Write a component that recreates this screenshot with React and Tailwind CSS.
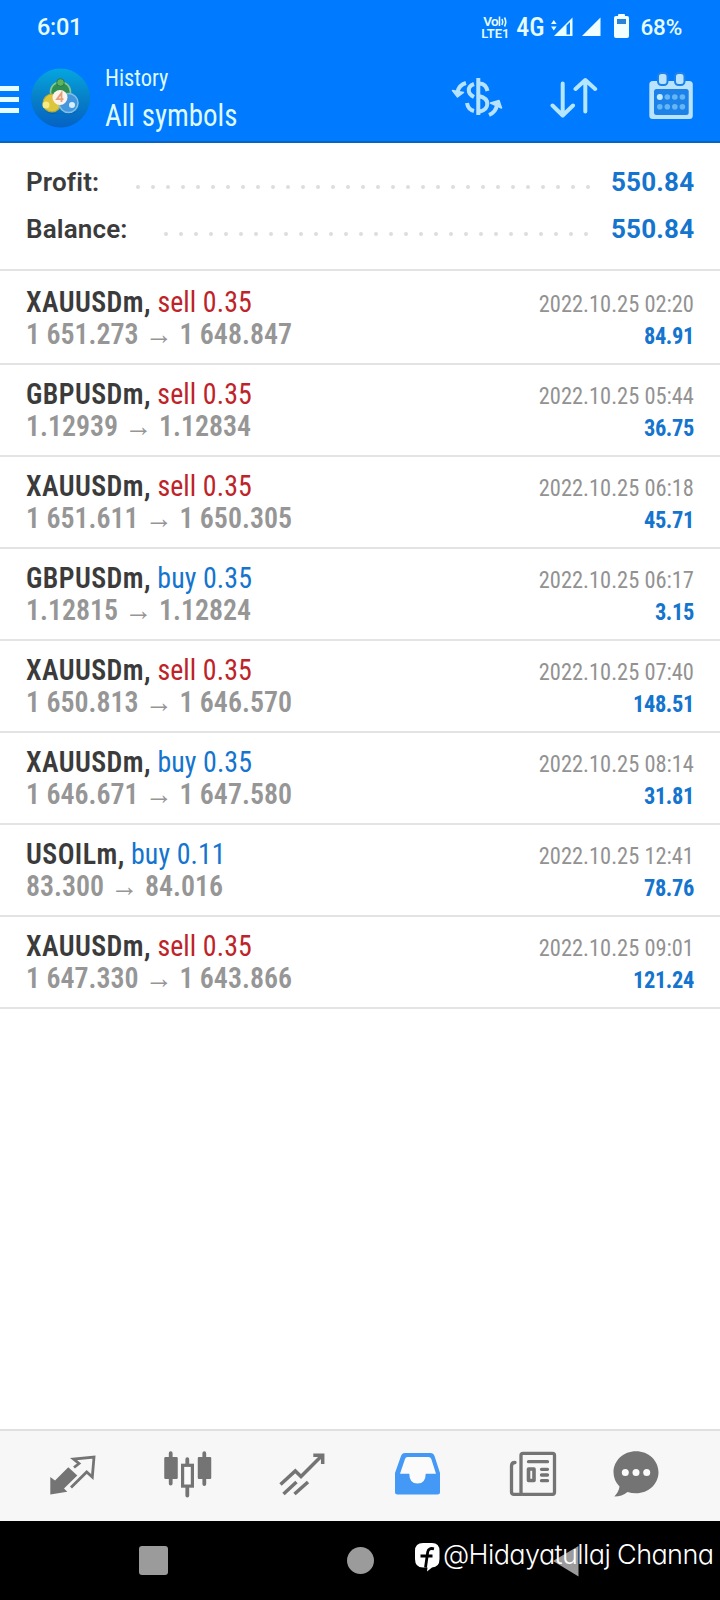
const trades = [
  ["XAUUSDm", "sell", "0.35", "1 651.273", "1 648.847", "2022.10.25 02:20", "84.91"],
  ["GBPUSDm", "sell", "0.35", "1.12939", "1.12834", "2022.10.25 05:44", "36.75"],
  ["XAUUSDm", "sell", "0.35", "1 651.611", "1 650.305", "2022.10.25 06:18", "45.71"],
  ["GBPUSDm", "buy", "0.35", "1.12815", "1.12824", "2022.10.25 06:17", "3.15"],
  ["XAUUSDm", "sell", "0.35", "1 650.813", "1 646.570", "2022.10.25 07:40", "148.51"],
  ["XAUUSDm", "buy", "0.35", "1 646.671", "1 647.580", "2022.10.25 08:14", "31.81"],
  ["USOILm", "buy", "0.11", "83.300", "84.016", "2022.10.25 12:41", "78.76"],
  ["XAUUSDm", "sell", "0.35", "1 647.330", "1 643.866", "2022.10.25 09:01", "121.24"],
];

function StatusBar() {
  return (
    <div className="flex h-[52px] items-start pl-[37px] pr-[38px] pt-3 font-medium text-[#e4fbff]">
      <span className="mt-px text-[23.5px] leading-[29px] tracking-[-0.3px]">6:01</span>
      <div className="ml-auto flex items-start">
        <div className="mt-[4px] flex w-[27px] flex-col text-[13px] font-semibold leading-[11px]">
          <span className="flex pl-0.5 text-[13.5px] tracking-[-0.6px]">
            Vo
            <svg className="h-3 w-2.5" viewBox="0 0 10 12" fill="none" stroke="#e4fbff" strokeWidth="1.6">
              <path d="M1.500 .5v9.500M4 3q1.500 3 0 6M6.500 1.500q2.500 4.500 0 9" />
            </svg>
          </span>
          <span>LTE1</span>
        </div>
        <span className="ml-[8px] text-[26px] leading-[30px] [font-family:'Roboto_Condensed',Roboto,sans-serif]">4G</span>
        <svg className="ml-[7px] mt-[5px] h-5 w-[22px]" viewBox="0 0 22 20" fill="#e9ffff">
          <path d="M0 7l2.800-4 2.800 4zM0 9.500h5.600l-2.800 4z" />
          <path d="M3 19L21.500 .5V19zM15.500 17.500h3.500V5L15.500 8.500z" fillRule="evenodd" />
        </svg>
        <svg className="ml-[9px] mt-[5px] h-5 w-[19px]" viewBox="0 0 19 20" fill="#f2ffff">
          <path d="M0 19L18.500 .5V19z" />
        </svg>
        <svg className="ml-[13px] mt-[2px] h-[25px] w-[15px]" viewBox="0 0 15 25">
          <rect x="4" y="0" width="7" height="4" rx="1" fill="#f2ffff" />
          <rect x="0" y="2" width="15" height="22" rx="2" fill="#f2ffff" />
          <rect x="3" y="5" width="9" height="5" fill="#2a83d8" />
        </svg>
        <span className="ml-[11px] text-[22.5px] leading-[30px] tracking-[-0.2px]">68%</span>
      </div>
    </div>
  );
}

function Logo() {
  return (
    <svg className="ml-3 h-[60px] w-[60px]" viewBox="0 0 60 60">
      <defs>
        <linearGradient id="disc" x1="0" y1="0" x2="0" y2="1">
          <stop offset="0" stopColor="#05a6e0" />
          <stop offset=".5" stopColor="#0780c8" />
          <stop offset="1" stopColor="#0562c4" />
        </linearGradient>
      </defs>
      <circle cx="29.500" cy="30" r="29.500" fill="url(#disc)" />
      <path d="M13 43Q30 49 47 43L40 46H20z" fill="#064f94" opacity=".5" />
      <circle cx="29.500" cy="24" r="10" fill="#2f8f52" stroke="#86c98e" strokeWidth="1.600" />
      <circle cx="21" cy="35" r="9" fill="#dcc63c" stroke="#a9a846" strokeWidth="1.200" />
      <circle cx="37.500" cy="35" r="9.500" fill="#4497dc" stroke="#7fc0e8" strokeWidth="1.500" />
      <circle cx="29.500" cy="14.500" r="3.800" fill="#5fb45a" stroke="#1d6f50" strokeWidth=".8" />
      <circle cx="15" cy="37" r="3.500" fill="#f6ea84" />
      <circle cx="41" cy="37" r="3" fill="#d6efff" />
      <circle cx="29" cy="29.500" r="7.500" fill="#fdf3ea" />
      <path d="M30.500 34v-9l-4.500 6.200h6.500" fill="none" stroke="#e2a07c" strokeWidth="1.800" />
    </svg>
  );
}

function Header() {
  return (
    <header className="h-[143px] shrink-0 border-b-2 border-[#0a64bd] bg-[#007aff]">
      <StatusBar />
      <div className="flex items-start pr-[25px] [font-family:'Roboto_Condensed',Roboto,sans-serif]">
        <div className="mt-[34px] flex w-[19px] flex-col gap-[6px]">
          <span className="h-[5px] bg-[#e6fcff]" />
          <span className="h-[5px] bg-[#e6fcff]" />
          <span className="h-[5px] bg-[#e6fcff]" />
        </div>
        <div className="mt-4"><Logo /></div>
        <div className="ml-[14px] mt-[10px] flex flex-col text-[#defaff]">
          <span className="origin-left scale-x-[0.935] text-[24px] font-[450] leading-[32px]">History</span>
          <span className="origin-left scale-x-[0.92] text-[31.5px] font-[450] leading-[44px]">All symbols</span>
        </div>
        <div className="ml-auto mt-5 flex gap-[49px]">
          <svg className="h-12 w-12 overflow-visible" viewBox="0 0 48 48" fill="none" stroke="#b5e2ff" strokeWidth="4" strokeLinecap="butt">
            <path d="M25.300 6v37M27 11.500Q33 12 34.500 19M26 24Q34.500 26 34.300 32Q34 38 27 39.500" />
            <path d="M21 12Q15.500 14 15.800 18.500Q16 22.500 21 25M14 31Q15 37.500 21 39" />
            <path d="M13 11Q6 13 4.500 20M36 43Q43 40 44 33" strokeWidth="4" />
            <path d="M-.5 18.500L4.500 25L10.500 20.500zM37.500 31L46 28.500L48.500 36z" fill="#b5e2ff" strokeWidth="1.500" strokeLinejoin="round" />
          </svg>
          <svg className="h-12 w-12" viewBox="0 0 48 48" fill="none" stroke="#b5e6ff" strokeWidth="4" strokeLinecap="round" strokeLinejoin="round">
            <path d="M12.700 11.500V43M2.500 33.500L12.700 43.500L23 33.500M35.300 39.500V9M25.500 17L35.300 8L45.200 17" />
          </svg>
          <svg className="h-12 w-12" viewBox="0 0 48 48">
            <rect x="2.300" y="9" width="43.500" height="38" rx="3.500" fill="#b9e3ff" />
            <rect x="7" y="17" width="34.700" height="26" rx="2.500" fill="#1c82ea" />
            <rect x="11" y="1" width="9.500" height="12" rx="3.500" fill="#b9e3ff" stroke="#1c82ea" strokeWidth="2" />
            <rect x="28" y="1" width="9.500" height="12" rx="3.500" fill="#b9e3ff" stroke="#1c82ea" strokeWidth="2" />
            <circle cx="12.800" cy="25" r="3" fill="#c5ecff" />
            {[20.3, 27.8, 35.4].map((x) => <circle key={x} cx={x} cy="25" r="2.800" fill="#64b6f4" />)}
            {[12.8, 20.3, 27.8, 35.4].map((x) => <circle key={x} cx={x} cy="34.700" r="2.800" fill="#64b6f4" />)}
          </svg>
        </div>
      </div>
    </header>
  );
}

function SummaryLine({ label, dots, dotsClass, value }) {
  return (
    <div className="flex h-[47px] items-center text-[26px] font-semibold leading-[47px] text-[#3b3b3b]">
      <span className="tracking-[0.15px]">{label}</span>
      <div className={"ml-auto mt-[9px] flex gap-[11px] " + dotsClass}>
        {Array.from({ length: dots }, (_, i) => <span key={i} className="h-1 w-1 rounded-full bg-[#dddddd]" />)}
      </div>
      <span className="w-[83px] text-right font-bold tracking-[0.2px] text-[#1474ce]">{value}</span>
    </div>
  );
}

function TradeRow({ trade, first }) {
  const [symbol, side, lots, open, close, time, profit] = trade;
  return (
    <li className={"flex justify-between border-b-2 border-[#e3e3e3] px-[26px] " + (first ? "h-[94px] pt-[15px]" : "h-[92px] pt-[13px]")}>
      <div className="flex origin-left scale-x-[0.93] flex-col text-[30px] leading-8">
        <span className="text-[#3b3b3b]">
          <b className="font-semibold tracking-[0.45px]">{symbol},</b>{" "}
          <span className={"tracking-[0.1px] " + (side === "sell" ? "text-[#bd2328]" : "text-[#1474ce]")}>{side} {lots}</span>
        </span>
        <span className="font-semibold text-[#969696]">
          {open} <span className="[font-family:Roboto,sans-serif]">→</span> {close}
        </span>
      </div>
      <div className="flex origin-right scale-x-[0.935] flex-col pt-0.5 text-right text-[24px] leading-8">
        <span className="text-[#929292]">{time}</span>
        <span className="font-bold tracking-[-0.4px] text-[#1474ce]">{profit}</span>
      </div>
    </li>
  );
}

function TabBar() {
  return (
    <nav className="flex h-[92px] shrink-0 border-t-2 border-[#e0e0e0] bg-[#f7f7f7] pl-12 pt-[19px]">
      <svg className="h-[50px] w-[50px]" viewBox="0 0 50 50">
        <path d="M2.300 27L7 30.500L20.300 17.300L29.300 25.500L16 38.500L19.300 41.700L2.300 44.500z" fill="#747474" />
        <path d="M26 17.500L31 13.500L25.500 9L46 7L44.300 27L38.700 22L23 37.500" fill="none" stroke="#747474" strokeWidth="2.800" />
      </svg>
      <svg className="ml-16 h-[50px] w-[50px]" viewBox="0 0 50 50" stroke="#747474" strokeLinecap="round">
        <path d="M8.700 3.200V33.500M42.300 3.200V34M25.300 9.200V14M25.300 38V45.500" strokeWidth="3.800" />
        <rect x="3" y="7.700" width="12" height="20.600" rx=".5" fill="#747474" strokeWidth="1.500" />
        <rect x="36.500" y="7.700" width="12" height="20.600" rx=".5" fill="#747474" strokeWidth="1.500" />
        <rect x="20.600" y="15.300" width="9.800" height="20.800" fill="#fafafa" strokeWidth="3.200" />
      </svg>
      <svg className="ml-[65px] h-[50px] w-[50px]" viewBox="0 0 50 50" fill="none" stroke="#747474" strokeWidth="3.500">
        <path d="M3.500 34.500L18.300 21L24 26.500L45.500 5M36.300 5.300H45.700V14M6.500 44L19.500 32M17.500 44L31 32" />
      </svg>
      <svg className="ml-[66px] h-[50px] w-[50px]" viewBox="0 0 50 50">
        <path d="M12 3H37.500Q40.500 3 41.500 6L47 23V42Q47 44.500 44.500 44.500H4.500Q2 44.500 2 42V23L8 6Q9 3 12 3z" fill="#4399f5" />
        <path d="M14.500 7H35.500Q37.500 7 38.300 9L43 23.700H32.700Q32.700 33.500 24.500 33.500T16.300 23.700H7L12 9Q12.500 7 14.500 7z" fill="#fbfbfb" />
      </svg>
      <svg className="ml-[65px] h-[50px] w-[50px]" viewBox="0 0 50 50" fill="none" stroke="#747474" strokeWidth="3.300" strokeLinecap="round">
        <rect x="13" y="3.300" width="33.500" height="41" rx="2" />
        <path d="M13 44.300H6Q3.500 44.300 3.500 42V16Q3.500 12.500 7 12.500M20.500 11.700H39.500M33.500 19.300H39.500M33.500 25H39.500M33.500 30.700H39.500" />
        <rect x="20.500" y="19" width="5.500" height="11.500" strokeLinejoin="round" strokeWidth="3.600" />
      </svg>
      <svg className="ml-[53px] h-[50px] w-[50px]" viewBox="0 0 50 50" fill="#747474">
        <path d="M25 1.300C37.500 1.300 47.500 10.500 47.500 22.300S37.500 43.300 25 43.300Q20.500 43.300 16.500 42Q11 46.500 3.300 46.500Q8 41.500 8.500 36.500Q2.500 30.500 2.500 22.300C2.500 10.500 12.500 1.300 25 1.300z" />
        <g fill="#fafafa">
          <circle cx="14.300" cy="22.400" r="3.500" />
          <circle cx="25" cy="22.400" r="3.500" />
          <circle cx="35.700" cy="22.400" r="3.500" />
        </g>
      </svg>
    </nav>
  );
}

function SystemNav() {
  return (
    <div className="relative flex h-[79px] shrink-0 items-start bg-black pt-[25px]">
      <span className="ml-[139px] h-[29px] w-[29px] rounded-[3px] bg-[#9b9b9b]" />
      <span className="ml-[179px] mt-px h-[27px] w-[27px] rounded-full bg-[#9b9b9b]" />
      <svg className="ml-[178px] h-[31px] w-[27px]" viewBox="0 0 27 31">
        <path d="M26.500 0V30.500L1 15z" fill="#9b9b9b" />
      </svg>
      <div className="absolute left-[415px] top-[18px] flex items-start text-white">
        <svg className="mt-[4px] h-[29px] w-[25px]" viewBox="0 0 25 29">
          <path d="M8 0H17Q24.500 0 24.500 8V16Q24.500 24 17 24.500L12 28.500L12.500 24.500H8Q0 24.500 0 16V8Q0 0 8 0z" fill="#fff" />
          <path d="M19 5.800Q13.500 4.500 12.700 9L10.500 24.500M5.500 13H17.500" fill="none" stroke="#000" strokeWidth="2.800" />
        </svg>
        <span className="ml-[3px] whitespace-nowrap text-[27px] font-light leading-8 tracking-[-0.6px] [font-family:Inter,sans-serif] [font-feature-settings:'cv11']">@Hidayatullaj Channa</span>
      </div>
    </div>
  );
}

export default function App() {
  return (
    <div className="flex h-[1600px] w-[720px] flex-col overflow-hidden bg-white [font-family:Roboto,sans-serif]">
      <Header />
      <section className="h-[128px] shrink-0 border-b-2 border-[#e3e3e3] px-[26px] pt-4">
        <SummaryLine label="Profit:" dots={31} dotsClass="mr-[21px]" value="550.84" />
        <SummaryLine label="Balance:" dots={29} dotsClass="mr-[23px]" value="550.84" />
      </section>
      <ul className="flex-1 [font-family:'Roboto_Condensed',Roboto,sans-serif]">
        {trades.map((t, i) => <TradeRow key={t[5]} trade={t} first={i === 0} />)}
      </ul>
      <TabBar />
      <SystemNav />
    </div>
  );
}
